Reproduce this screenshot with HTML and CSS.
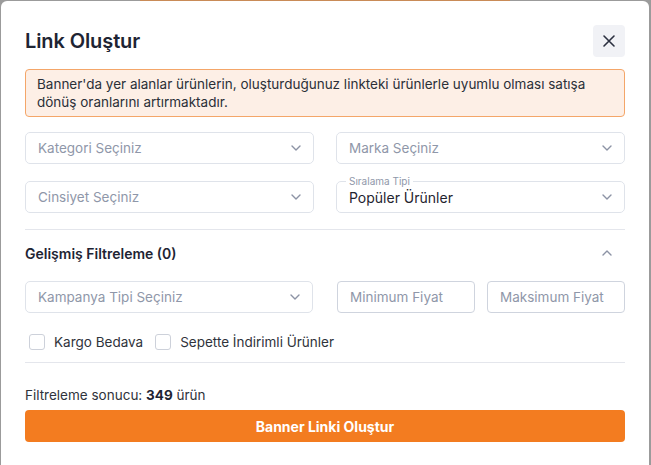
FILE: index.html
```html
<!DOCTYPE html>
<html lang="tr">
<head>
<meta charset="utf-8">
<title>Link Oluştur</title>
<link rel="stylesheet" href="styles.css">
</head>
<body>
<div class="modal">
  <div class="modal-head">
    <h1 class="title">Link Oluştur</h1>
    <button class="close" aria-label="Kapat">
      <svg width="14" height="14" viewBox="0 0 14 14"><path d="M2 2L12 12M12 2L2 12" stroke="#2b3040" stroke-width="1.6" stroke-linecap="round"/></svg>
    </button>
  </div>

  <div class="alert">Banner'da yer alanlar ürünlerin, oluşturduğunuz linkteki ürünlerle uyumlu olması satışa dönüş oranlarını artırmaktadır.</div>

  <div class="grid">
    <div class="select"><span class="ph">Kategori Seçiniz</span><svg class="chev" width="10" height="6" viewBox="0 0 10 6"><path d="M1 1L5 5L9 1" fill="none" stroke="#8c93a5" stroke-width="1.4" stroke-linecap="round" stroke-linejoin="round"/></svg></div>
    <div class="select"><span class="ph">Marka Seçiniz</span><svg class="chev" width="10" height="6" viewBox="0 0 10 6"><path d="M1 1L5 5L9 1" fill="none" stroke="#8c93a5" stroke-width="1.4" stroke-linecap="round" stroke-linejoin="round"/></svg></div>
    <div class="select"><span class="ph">Cinsiyet Seçiniz</span><svg class="chev" width="10" height="6" viewBox="0 0 10 6"><path d="M1 1L5 5L9 1" fill="none" stroke="#8c93a5" stroke-width="1.4" stroke-linecap="round" stroke-linejoin="round"/></svg></div>
    <div class="select floating"><span class="flabel">Sıralama Tipi</span><span class="val">Popüler Ürünler</span><svg class="chev" width="10" height="6" viewBox="0 0 10 6"><path d="M1 1L5 5L9 1" fill="none" stroke="#8c93a5" stroke-width="1.4" stroke-linecap="round" stroke-linejoin="round"/></svg></div>
  </div>

  <hr class="divider">

  <div class="adv-head">
    <span class="adv-title">Gelişmiş Filtreleme (0)</span>
    <svg class="chev-up" width="10" height="6" viewBox="0 0 10 6"><path d="M1 5L5 1L9 5" fill="none" stroke="#8c93a5" stroke-width="1.4" stroke-linecap="round" stroke-linejoin="round"/></svg>
  </div>

  <div class="adv-row">
    <div class="select"><span class="ph">Kampanya Tipi Seçiniz</span><svg class="chev" width="10" height="6" viewBox="0 0 10 6"><path d="M1 1L5 5L9 1" fill="none" stroke="#8c93a5" stroke-width="1.4" stroke-linecap="round" stroke-linejoin="round"/></svg></div>
    <div class="price"><div class="input">Minimum Fiyat</div><div class="input">Maksimum Fiyat</div></div>
  </div>

  <div class="checks">
    <label class="check"><span class="box"></span>Kargo Bedava</label>
    <label class="check"><span class="box"></span>Sepette İndirimli Ürünler</label>
  </div>

  <hr class="divider low">

  <p class="result">Filtreleme sonucu: <b>349</b> ürün</p>
  <button class="cta">Banner Linki Oluştur</button>
</div>
</body>
</html>
```

FILE: styles.css
```css
* { box-sizing: border-box; }
html, body { height: 100%; }
body {
  margin: 0;
  padding: 1px 2px 0 1px;
  background-color: #9b9b9b;
  background-image: linear-gradient(to right, transparent 140px, #c98b57 140px, #c98b57 510px, transparent 510px);
  background-size: 100% 1px;
  background-repeat: no-repeat;
  font-family: Inter, "Noto Sans", sans-serif;
  color: #2a2f3a;
  overflow: hidden;
}
.modal {
  background: #fff;
  border-radius: 6px 6px 0 0;
  padding: 24px 24px 0 24px;
  height: 100%;
  overflow: hidden;
}
.modal-head {
  display: flex;
  align-items: center;
  justify-content: space-between;
  height: 32px;
}
.title {
  margin: 0;
  font-size: 20px;
  font-weight: 600;
  color: #1e2433;
  letter-spacing: -0.1px;
}
.close {
  width: 32px;
  height: 32px;
  border: 0;
  border-radius: 4px;
  background: #f1f2f6;
  display: flex;
  align-items: center;
  justify-content: center;
  padding: 0;
}
.alert {
  margin-top: 12px;
  background: #fdefe6;
  border: 1px solid #f4a669;
  border-radius: 4px;
  padding: 5px 11px;
  font-size: 13.5px;
  line-height: 18px;
  color: #2b2f38;
}
.grid {
  margin-top: 15px;
  display: grid;
  grid-template-columns: 1fr 1fr;
  column-gap: 22px;
  row-gap: 17px;
}
.select {
  position: relative;
  height: 32px;
  border: 1px solid #dfe3ea;
  border-radius: 5px;
  display: flex;
  align-items: center;
  justify-content: space-between;
  padding: 0 12px 0 12px;
  font-size: 13.5px;
}
.ph { color: #8f97a9; }
.val { color: #1f2430; font-size: 14px; }
.chev { flex: none; }
.flabel {
  position: absolute;
  left: 9px;
  top: -6px;
  background: #fff;
  padding: 0 3px;
  font-size: 10px;
  line-height: 11px;
  color: #8f97a9;
}
.divider {
  border: 0;
  border-top: 1px solid #e4e6ec;
  margin: 16px 0 0;
}
.adv-head {
  margin-top: 13px;
  display: flex;
  align-items: center;
  justify-content: space-between;
  height: 20px;
  padding-right: 13px;
}
.adv-title { font-size: 14px; font-weight: 600; color: #1e2433; }
.adv-row {
  margin-top: 18px;
  display: grid;
  grid-template-columns: 288px 1fr;
  column-gap: 24px;
}
.price {
  display: grid;
  grid-template-columns: 1fr 1fr;
  column-gap: 12px;
}
.input {
  height: 32px;
  border: 1px solid #cfd4de;
  border-radius: 4px;
  display: flex;
  align-items: center;
  padding: 0 12px;
  font-size: 13.5px;
  color: #8f97a9;
  white-space: nowrap;
}
.checks {
  margin-top: 18px;
  display: flex;
  gap: 12px;
  padding-left: 4px;
  height: 22px;
  align-items: center;
}
.check {
  display: flex;
  align-items: center;
  gap: 9px;
  font-size: 13.5px;
  color: #2f333b;
}
.box {
  width: 16px;
  height: 16px;
  border: 1px solid #cdd1da;
  border-radius: 3px;
  background: #fff;
}
.divider.low { margin-top: 9px; }
.result {
  margin: 23px 0 0;
  font-size: 13.5px;
  line-height: 18px;
  color: #2f333b;
}
.result b { font-weight: 700; color: #1e2433; }
.cta {
  display: block;
  width: 100%;
  margin-top: 6px;
  height: 32px;
  border: 0;
  border-radius: 4px;
  background: #f37c20;
  color: #fff;
  font-family: inherit;
  font-size: 14px;
  font-weight: 700;
}
```
